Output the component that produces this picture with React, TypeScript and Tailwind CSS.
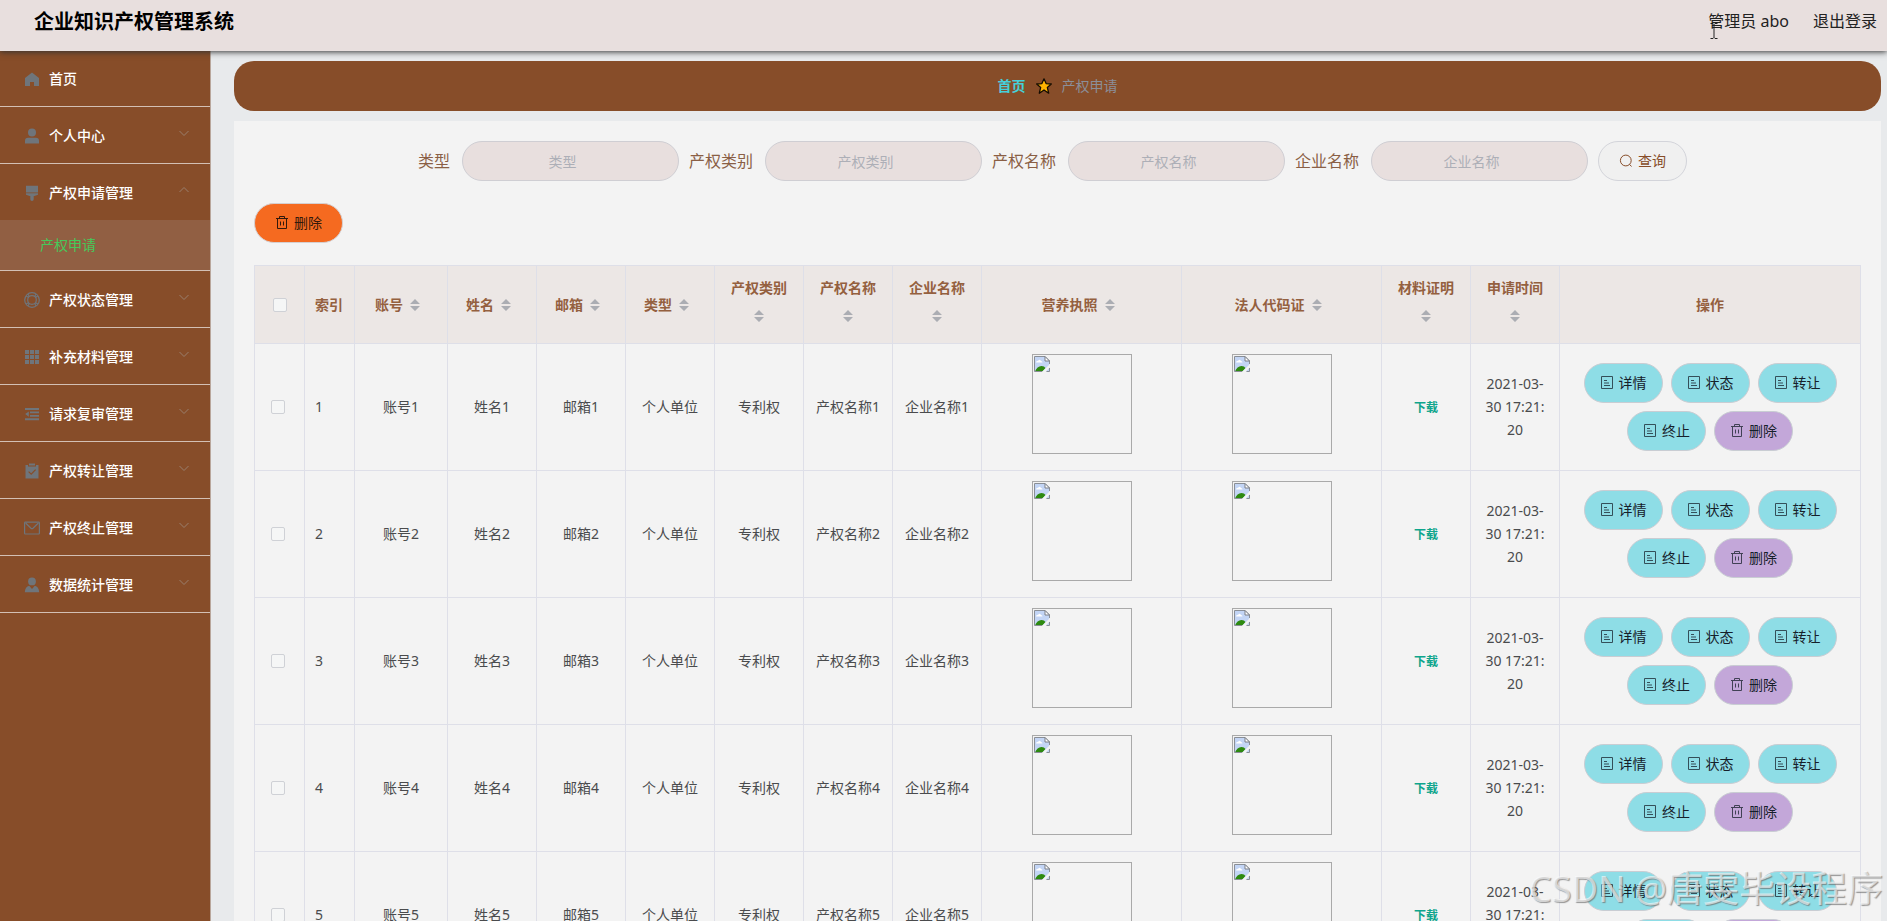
import { useState } from "react";
import type { ReactNode } from "react";
import clsx from "clsx";

type IconProps = { className?: string };

type MenuEntry = {
  label: string;
  icon: (props: IconProps) => ReactNode;
  children?: string[];
  open?: boolean;
  leaf?: boolean;
};

type Column = {
  label: string;
  width?: string;
  align?: "left" | "center";
  sortable?: boolean;
};

/* ---------- icons ---------- */

function HomeIcon({ className }: IconProps) {
  return (
    <svg viewBox="0 0 16 16" className={className} fill="currentColor">
      <path d="M8 1.5 15 7v8h-5v-4H6v4H1V7z" />
    </svg>
  );
}

function UserIcon({ className }: IconProps) {
  return (
    <svg viewBox="0 0 16 16" className={className} fill="currentColor">
      <circle cx="8" cy="4.6" r="4" />
      <path d="M1 15.4v-2.6a3 3 0 0 1 3-3h8a3 3 0 0 1 3 3v2.6z" />
    </svg>
  );
}

function BrushIcon({ className }: IconProps) {
  return (
    <svg viewBox="0 0 16 16" className={className} fill="currentColor">
      <path d="M2 .8h12v6.6H2zM2 8.3h12v1.5L10.4 11h-.7v3.2a1.7 1.7 0 0 1-3.4 0V11h-.7L2 9.8z" />
    </svg>
  );
}

function HelpIcon({ className }: IconProps) {
  return (
    <svg viewBox="0 0 16 16" className={className} fill="none" stroke="currentColor" strokeWidth="1.2">
      <circle cx="8" cy="8" r="7.3" />
      <circle cx="8" cy="8" r="4.3" />
      <path d="M2.2 4.2 4.8 5.4M4.2 2.2 5.4 4.8M13.8 4.2l-2.6 1.2M11.8 2.2l-1.2 2.6M2.2 11.8l2.6-1.2M4.2 13.8l1.2-2.6M13.8 11.8l-2.6-1.2M11.8 13.8l-1.2-2.6" />
    </svg>
  );
}

function GridIcon({ className }: IconProps) {
  return (
    <svg viewBox="0 0 16 16" className={className} fill="currentColor">
      <path d="M1 1h4v4H1zM6 1h4v4H6zM11 1h4v4h-4zM1 6h4v4H1zM6 6h4v4H6zM11 6h4v4h-4zM1 11h4v4H1zM6 11h4v4H6zM11 11h4v4h-4z" />
    </svg>
  );
}

function FoldIcon({ className }: IconProps) {
  return (
    <svg viewBox="0 0 16 16" className={className} fill="currentColor">
      <path d="M1 2h14v2H1zM6 5.5h9v1.8H6zM6 9h9v1.8H6zM1 12.3h14v2H1zM4.8 5.5v5.2L1.2 8.1z" />
    </svg>
  );
}

function ClaimIcon({ className }: IconProps) {
  return (
    <svg viewBox="0 0 16 16" className={className}>
      <path fill="currentColor" d="M1.5 2H4v1.6h8V2h2.5v13.5h-13zM5 .5h6v2H5z" />
      <path fill="none" stroke="#874d29" strokeWidth="1.2" d="m4.6 8.6 2.6 2.6 4.4-4.6" />
    </svg>
  );
}

function MessageIcon({ className }: IconProps) {
  return (
    <svg viewBox="0 0 16 16" className={className} fill="none" stroke="currentColor" strokeWidth="1.2">
      <rect x=".6" y="2.2" width="14.8" height="11.8" rx=".8" />
      <path d="m1.6 3 5.4 5.2q1 .8 2 0L14.4 3" />
    </svg>
  );
}

function CustomIcon({ className }: IconProps) {
  return (
    <svg viewBox="0 0 16 16" className={className} fill="currentColor">
      <circle cx="8" cy="4.4" r="3.9" />
      <path d="M5.2 8.8 8 12l2.8-3.2c2.6.7 4.2 2.8 4.4 6.4H.8c.2-3.6 1.8-5.7 4.4-6.4z" />
    </svg>
  );
}

function Chevron({ up }: { up?: boolean }) {
  return (
    <svg viewBox="0 0 12 12" className="mb-1.5 size-3 text-[#9a7f6d]" fill="none" stroke="currentColor">
      <path d={up ? "M1.5 8 6 3.5 10.5 8" : "M1.5 4 6 8.5 10.5 4"} />
    </svg>
  );
}

function DocumentIcon({ className }: IconProps) {
  return (
    <svg viewBox="0 0 14 14" className={className} fill="none" stroke="currentColor">
      <path d="M1.5.5h11v12h-11zM4 4.5h3M4 7h5M4 9.5h6" />
    </svg>
  );
}

function TrashIcon({ className }: IconProps) {
  return (
    <svg viewBox="0 0 14 14" className={className} fill="none" stroke="currentColor">
      <path d="M1 2.5h12M2.5 2.5v10h9v-10M4.5 2.5v-2h5v2M5.5 5.5v4M8.5 5.5v4" />
    </svg>
  );
}

function SearchIcon({ className }: IconProps) {
  return (
    <svg viewBox="0 0 14 14" className={className} fill="none" stroke="currentColor">
      <circle cx="6.8" cy="6.5" r="5.4" />
      <path d="m10.5 10.3 2 2.2" />
    </svg>
  );
}

function StarIcon() {
  return (
    <svg viewBox="0 0 16 16" className="size-4">
      <path
        d="m8 .8 2.1 4.8 5.2.4-4 3.4 1.4 5.8L8 12l-4.700 3.200 1.400-5.800L.7 6l5.200-.4z"
        fill="#ffb300"
        stroke="#140c02"
        strokeWidth="1.3"
        strokeLinejoin="round"
      />
    </svg>
  );
}

function SortCaret() {
  return (
    <span className="inline-flex h-[34px] w-6 items-center justify-center">
      <svg viewBox="0 0 10 12" className="h-3 w-2.5" fill="#abadb3">
        <path d="M5 0l5 5H0zM5 12l5-5H0z" />
      </svg>
    </span>
  );
}

function MissingImage({ label }: { label: string }) {
  return (
    <div role="img" aria-label={label} className="mx-auto size-[100px] border border-[#a9a9a9] p-px">
      <svg viewBox="0 0 16 16" className="size-4">
        <path d="M.5.5H11L15.5 5v10.5H.5z" fill="#c3d5f5" />
        <path d="M2 6.5q.3-2 2-1.6Q5.5 2.8 7 5q1.6.2 1.4 1.5z" fill="#fff" />
        <path d="M1 15.5Q3 10.200 7.5 10q2.800 0 4 2l-3.200 3.500z" fill="#2d8a10" />
        <path d="m8 16 8-8v3l-4.5 5z" fill="#f3f3f3" />
        <path d="M.5 15.5V.5H11L15.5 5v3M.5 15.5H8M12.5 15.5h3V12" fill="none" stroke="#8a8f96" />
        <path d="M11 .5V5h4.5z" fill="#fff" stroke="#7a7f86" />
      </svg>
    </div>
  );
}

/* ---------- data ---------- */

const menu: MenuEntry[] = [
  { label: "首页", icon: HomeIcon, leaf: true },
  { label: "个人中心", icon: UserIcon },
  { label: "产权申请管理", icon: BrushIcon, children: ["产权申请"], open: true },
  { label: "产权状态管理", icon: HelpIcon },
  { label: "补充材料管理", icon: GridIcon },
  { label: "请求复审管理", icon: FoldIcon },
  { label: "产权转让管理", icon: ClaimIcon },
  { label: "产权终止管理", icon: MessageIcon },
  { label: "数据统计管理", icon: CustomIcon },
];

const filters = ["类型", "产权类别", "产权名称", "企业名称"];

const columns: Column[] = [
  { label: "索引", width: "w-[50px]", align: "left" },
  { label: "账号", width: "w-[93px]", sortable: true },
  { label: "姓名", width: "w-[89px]", sortable: true },
  { label: "邮箱", width: "w-[89px]", sortable: true },
  { label: "类型", width: "w-[89px]", sortable: true },
  { label: "产权类别", width: "w-[89px]", sortable: true },
  { label: "产权名称", width: "w-[89px]", sortable: true },
  { label: "企业名称", width: "w-[89px]", sortable: true },
  { label: "营养执照", width: "w-[200px]", sortable: true },
  { label: "法人代码证", width: "w-[200px]", sortable: true },
  { label: "材料证明", width: "w-[89px]", sortable: true },
  { label: "申请时间", width: "w-[89px]", sortable: true },
  { label: "操作" },
];

const rows = [1, 2, 3, 4, 5];
const actions = ["详情", "状态", "转让", "终止"];

/* ---------- page parts ---------- */

function Header() {
  return (
    <header className="relative z-10 flex h-[51px] shrink-0 items-center justify-between bg-[#e8dfde] pr-2.5 pb-2 pl-[34px] shadow-[0_1px_6px_#333]">
      <h1 className="text-xl font-bold text-black">企业知识产权管理系统</h1>
      <div className="flex items-center gap-6 pb-0.5 text-base text-[#222]">
        <span>管理员 abo</span>
        <a href="#logout">退出登录</a>
      </div>
    </header>
  );
}

function Sidebar() {
  return (
    <nav className="w-[211px] shrink-0 border-r border-[#b9a79c] bg-[#874d29]">
      <ul>
        {menu.map(({ label, icon: Icon, children, open, leaf }) => (
          <li key={label} className="border-b border-[#d3c0b4]">
            <a
              href="#menu"
              className={clsx(
                "flex items-center gap-[9px] pr-5 pl-6 text-sm font-medium text-white",
                leaf ? "h-[55px]" : "h-14 pt-0.5"
              )}
            >
              <Icon className="size-4 text-[#6f757b]" />
              <span className="flex-1">{label}</span>
              {!leaf && <Chevron up={open} />}
            </a>
            {open &&
              children?.map((child) => (
                <a
                  key={child}
                  href="#apply"
                  className="flex h-[50px] items-center bg-[#915f43] pl-10 text-sm text-[#46c95a]"
                >
                  {child}
                </a>
              ))}
          </li>
        ))}
      </ul>
    </nav>
  );
}

function FilterBar() {
  return (
    <form className="flex flex-wrap items-center justify-center gap-2.5 pr-2.5">
      {filters.map((name) => (
        <label key={name} className="flex items-center gap-3 text-base text-[#8a5f45]">
          {name}
          <input
            type="text"
            placeholder={name}
            className="h-10 w-[217px] rounded-full border border-[#cfced3] bg-[#e8dfde] pr-8 pl-4 text-center text-sm text-[#606266] outline-none placeholder:text-[#adafb7]"
          />
        </label>
      ))}
      <button
        type="button"
        className="flex h-10 items-center gap-[5px] rounded-full border border-[#d3d4da] bg-[#f0f0f0] px-5 text-sm text-[#874d29]"
      >
        <SearchIcon className="size-3.5" />
        查询
      </button>
    </form>
  );
}

function ActionButton({ label, danger }: { label: string; danger?: boolean }) {
  return (
    <button
      type="button"
      className={clsx(
        "flex h-10 items-center gap-[5px] rounded-full border border-[#c9cdd3] px-[15px] text-sm text-[#16202a]",
        danger ? "bg-[#c3a7d9]" : "bg-[#8edde6]"
      )}
    >
      {danger ? (
        <TrashIcon className="size-3.5 opacity-75" />
      ) : (
        <DocumentIcon className="size-3.5 opacity-75" />
      )}
      {label}
    </button>
  );
}

function Check({ label, checked, onChange }: { label: string; checked: boolean; onChange: () => void }) {
  return (
    <input
      type="checkbox"
      aria-label={label}
      checked={checked}
      onChange={onChange}
      className="block size-3.5 appearance-none rounded-xs border border-[#cfd1d6] bg-[#f5f6f6] checked:border-[#409eff] checked:bg-[#409eff]"
    />
  );
}

function ApplyTable() {
  const [selected, setSelected] = useState<number[]>([]);
  const allSelected = selected.length === rows.length;

  const toggle = (id: number) =>
    setSelected((prev) => (prev.includes(id) ? prev.filter((x) => x !== id) : [...prev, id]));

  const cell = "border-r border-b border-[#dedfe8] px-2.5";
  const textCell = clsx(cell, "pb-0.5");

  return (
    <table className="w-full table-fixed border-separate border-spacing-0 border-t border-l border-[#dedfe8] text-sm leading-[23px] text-[#4a4b4d]">
      <thead className="bg-[#ece7e5] text-[#94603f]">
        <tr className="h-[78px]">
          <th className={clsx(cell, "w-[50px]")}>
            <div className="flex justify-center">
              <Check
                label="全选"
                checked={allSelected}
                onChange={() => setSelected(allSelected ? [] : rows)}
              />
            </div>
          </th>
          {columns.map((col) => (
            <th
              key={col.label}
              className={clsx(
                cell,
                col.width,
                "font-bold",
                col.align === "left" ? "text-left" : "text-center"
              )}
            >
              {col.sortable ? (
                <div className="flex flex-wrap items-center justify-center">
                  <span>{col.label}</span>
                  <SortCaret />
                </div>
              ) : (
                col.label
              )}
            </th>
          ))}
        </tr>
      </thead>
      <tbody className="text-center">
        {rows.map((id) => (
          <tr key={id}>
            <td className={cell}>
              <div className="flex pl-1.5">
                <Check label={`选择${id}`} checked={selected.includes(id)} onChange={() => toggle(id)} />
              </div>
            </td>
            <td className={clsx(textCell, "text-left")}>{id}</td>
            <td className={textCell}>账号{id}</td>
            <td className={textCell}>姓名{id}</td>
            <td className={textCell}>邮箱{id}</td>
            <td className={textCell}>个人单位</td>
            <td className={textCell}>专利权</td>
            <td className={clsx(textCell, "whitespace-nowrap")}>产权名称{id}</td>
            <td className={clsx(textCell, "whitespace-nowrap")}>企业名称{id}</td>
            <td className={clsx(cell, "pt-2.5 pb-4")}>
              <MissingImage label="营养执照" />
            </td>
            <td className={clsx(cell, "pt-2.5 pb-4")}>
              <MissingImage label="法人代码证" />
            </td>
            <td className={textCell}>
              <a href="#download" className="text-xs font-bold text-[#0fa58c]">
                下载
              </a>
            </td>
            <td className={textCell}>
              2021-03-
              <br />
              30 17:21:
              <br />
              20
            </td>
            <td className={cell}>
              <div className="flex flex-wrap justify-center gap-2">
                {actions.map((label) => (
                  <ActionButton key={label} label={label} />
                ))}
                <ActionButton label="删除" danger />
              </div>
            </td>
          </tr>
        ))}
      </tbody>
    </table>
  );
}

export default function App() {
  return (
    <div className="relative flex h-screen flex-col overflow-hidden bg-[#e8eaec] font-['Noto_Sans','Noto_Sans_CJK_SC',sans-serif]">
      <Header />
      <div className="flex min-h-0 flex-1">
        <Sidebar />
        <main className="flex min-w-0 flex-1 flex-col gap-2.5 pt-2.5 pr-1.5 pl-[23px]">
          <div className="flex h-[50px] shrink-0 items-center justify-center gap-2.5 rounded-[20px] bg-[#874d29] text-sm">
            <a href="#home" className="font-bold text-[#45d0da]">
              首页
            </a>
            <StarIcon />
            <span className="text-[#8b8f99]">产权申请</span>
          </div>

          <section className="min-h-0 flex-1 bg-[#f3f3f3] p-5">
            <FilterBar />
            <button
              type="button"
              className="my-[22px] flex h-10 items-center gap-[5px] rounded-full border border-[#d5cfd0] bg-[#f56a20] px-5 text-sm text-[#33190c]"
            >
              <TrashIcon className="size-3.5" />
              删除
            </button>
            <ApplyTable />
          </section>
        </main>
      </div>

      {/* Watermark */}
      <p className="pointer-events-none absolute right-1 bottom-3 z-20 text-4xl whitespace-nowrap text-white/60 [text-shadow:1px_1px_1px_#666a]">
        CSDN @唐雯毕设程序
      </p>

      {/* Text cursor */}
      <svg
        viewBox="0 0 8 16"
        className="pointer-events-none absolute top-[23px] right-[169px] z-20 h-4 w-2"
        fill="none"
        stroke="#222"
      >
        <path d="M.5.5H3l1 1 1-1h2.500M4 1.500v13M.5 15.500H3l1-1 1 1h2.500" />
      </svg>
    </div>
  );
}
